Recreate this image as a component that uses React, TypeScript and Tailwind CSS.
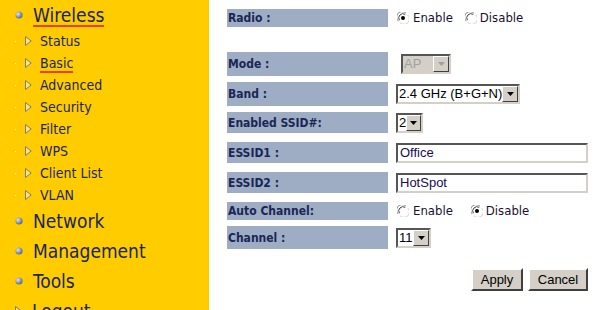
import React from "react";

const navy = "text-[#1a2656]";

function Bullet() {
  return (
    <svg width="8" height="8" viewBox="0 0 8 8" className="shrink-0">
      <defs>
        <radialGradient id="bg" cx="35%" cy="35%" r="65%">
          <stop offset="0%" stopColor="#dfe6f0" />
          <stop offset="60%" stopColor="#8d9ab0" />
          <stop offset="100%" stopColor="#5d6a80" />
        </radialGradient>
      </defs>
      <circle cx="4" cy="4" r="3.6" fill="url(#bg)" />
    </svg>
  );
}

function Arrow() {
  return (
    <svg width="7" height="10" viewBox="0 0 7 10" className="shrink-0">
      <polygon points="0.5,0.5 6.2,5 0.5,9.5" fill="#ffe27a" stroke="#7c7c84" strokeWidth="1" />
    </svg>
  );
}

function SubItem({ label, active }: { label: string; active?: boolean }) {
  return (
    <div className="flex h-[22px] shrink-0 items-center">
      <div className="ml-[15px] h-px w-px bg-[#fff6c8]" />
      <div className="ml-[9px]">
        <Arrow />
      </div>
      <span
        className={`ml-[8px] text-[14px] leading-[16px] ${navy} ${
          active ? "border-b-2 border-[#e8401c] pt-[2px]" : ""
        }`}
      >
        {label}
      </span>
    </div>
  );
}

function TopItem({ label, arrow }: { label: string; arrow?: boolean }) {
  return (
    <div className="flex h-[30px] shrink-0 items-center pl-[15px]">
      {arrow ? <Arrow /> : <Bullet />}
      <span className={`ml-[10px] text-[19px] leading-none ${navy}`}>{label}</span>
    </div>
  );
}

function Radio({ checked }: { checked?: boolean }) {
  return (
    <svg width="12" height="12" viewBox="0 0 12 12" className="shrink-0">
      <circle cx="6" cy="6" r="5.5" fill="#ffffff" />
      <path d="M1.2 9 A5.3 5.3 0 0 1 9 1.2" fill="none" stroke="#808080" strokeWidth="1" />
      <path d="M2.4 8.2 A4.2 4.2 0 0 1 8.2 2.4" fill="none" stroke="#404040" strokeWidth="1" />
      <path d="M3 10.8 A5.3 5.3 0 0 0 10.8 3" fill="none" stroke="#d4d0c8" strokeWidth="1" />
      {checked && <circle cx="6" cy="6" r="2" fill="#000000" />}
    </svg>
  );
}

function DropButton({ disabled }: { disabled?: boolean }) {
  return (
    <div className="flex h-full w-[16px] items-center justify-center border border-t-white border-l-white border-r-[#404040] border-b-[#404040] bg-[#d4d0c8]">
      <svg width="7" height="4" viewBox="0 0 7 4">
        <polygon points="0,0 7,0 3.5,4" fill={disabled ? "#a0a0a0" : "#000000"} />
      </svg>
    </div>
  );
}

function Select({ value, width, disabled }: { value: string; width: string; disabled?: boolean }) {
  return (
    <div
      className={`flex h-[20px] ${width} items-stretch border-2 border-t-[#555555] border-l-[#555555] border-b-[#d4d0c8] border-r-[#d4d0c8] ${
        disabled ? "bg-[#d4d0c8] text-[#a0a0a0]" : "bg-white text-black"
      }`}
    >
      <span className="flex-1 pl-px font-['Liberation_Sans',Arial,sans-serif] text-[13px] leading-[16px] whitespace-nowrap">
        {value}
      </span>
      <DropButton disabled={disabled} />
    </div>
  );
}

function TextBox({ value }: { value: string }) {
  return (
    <div className="flex h-[20px] w-[192px] items-center border-2 border-t-[#555555] border-l-[#555555] border-b-[#d4d0c8] border-r-[#d4d0c8] bg-white pl-[2px] font-['Liberation_Sans',Arial,sans-serif] text-[13px] leading-[16px] text-[#1a0a50]">
      {value}
    </div>
  );
}

function Label({ text, h }: { text: string; h: string }) {
  return (
    <div className={`flex ${h} w-[161px] shrink-0 items-center bg-[#9eadc4] pl-px text-[12px] leading-[14px] font-bold ${navy}`}>
      {text}
    </div>
  );
}

function Btn({ text, w }: { text: string; w: string }) {
  return (
    <div
      className={`flex h-[23px] ${w} items-center justify-center border-2 border-t-white border-l-white border-r-[#404040] border-b-[#404040] bg-[#d4d0c8] font-['Liberation_Sans',Arial,sans-serif] text-[13px] leading-[16px] text-black`}
    >
      {text}
    </div>
  );
}

export default function App() {
  return (
    <div className="flex h-[310px] w-[605px] overflow-hidden bg-white font-['DejaVu_Sans_Condensed','DejaVu_Sans',sans-serif] leading-[16px]">
      {/* side menu */}
      <div className="flex w-[209px] shrink-0 flex-col bg-[#ffcc00]">
        <div className="flex h-[30px] shrink-0 items-start pl-[15px] pt-[10px]">
          <div className="pt-px">
            <Bullet />
          </div>
          <span className={`-mt-[4px] ml-[10px] border-b-2 border-[#e8401c] text-[19px] leading-[19px] ${navy}`}>
            Wireless
          </span>
        </div>
        <SubItem label="Status" />
        <SubItem label="Basic" active />
        <SubItem label="Advanced" />
        <SubItem label="Security" />
        <SubItem label="Filter" />
        <SubItem label="WPS" />
        <SubItem label="Client List" />
        <SubItem label="VLAN" />
        <TopItem label="Network" />
        <TopItem label="Management" />
        <TopItem label="Tools" />
        <TopItem label="Logout" arrow />
      </div>

      {/* form */}
      <div className="flex flex-col pl-[18px] pt-[9px]">
        <div className="flex items-center">
          <Label text="Radio :" h="h-[18px]" />
          <div className="ml-[9px] flex items-center text-[13px] leading-[16px] text-[#1a1030]">
            <Radio checked />
            <span className="ml-[4px]">Enable</span>
            <span className="ml-[12px]">
              <Radio />
            </span>
            <span className="ml-[3px]">Disable</span>
          </div>
        </div>

        <div className="mt-[25px] flex items-center">
          <Label text="Mode :" h="h-[24px]" />
          <div className="ml-[13px]">
            <Select value="AP" width="w-[50px]" disabled />
          </div>
        </div>

        <div className="mt-[6px] flex items-center">
          <Label text="Band :" h="h-[24px]" />
          <div className="ml-[8px]">
            <Select value="2.4 GHz (B+G+N)" width="w-[124px]" />
          </div>
        </div>

        <div className="mt-[6px] flex items-center">
          <Label text="Enabled SSID#:" h="h-[21px]" />
          <div className="ml-[8px]">
            <Select value="2" width="w-[27px]" />
          </div>
        </div>

        <div className="mt-[9px] flex items-center">
          <Label text="ESSID1 :" h="h-[21px]" />
          <div className="ml-[8px]">
            <TextBox value="Office" />
          </div>
        </div>

        <div className="mt-[9px] flex items-center">
          <Label text="ESSID2 :" h="h-[21px]" />
          <div className="ml-[8px]">
            <TextBox value="HotSpot" />
          </div>
        </div>

        <div className="mt-[9px] flex items-center">
          <Label text="Auto Channel:" h="h-[18px]" />
          <div className="ml-[9px] flex items-center text-[13px] leading-[16px] text-[#1a1030]">
            <Radio />
            <span className="ml-[4px]">Enable</span>
            <span className="ml-[18px]">
              <Radio checked />
            </span>
            <span className="ml-[3px]">Disable</span>
          </div>
        </div>

        <div className="mt-[6px] flex items-center">
          <Label text="Channel :" h="h-[23px]" />
          <div className="ml-[8px]">
            <Select value="11" width="w-[35px]" />
          </div>
        </div>

        <div className="mt-[19px] flex justify-end gap-[5px]">
          <Btn text="Apply" w="w-[52px]" />
          <Btn text="Cancel" w="w-[60px]" />
        </div>
      </div>
    </div>
  );
}
